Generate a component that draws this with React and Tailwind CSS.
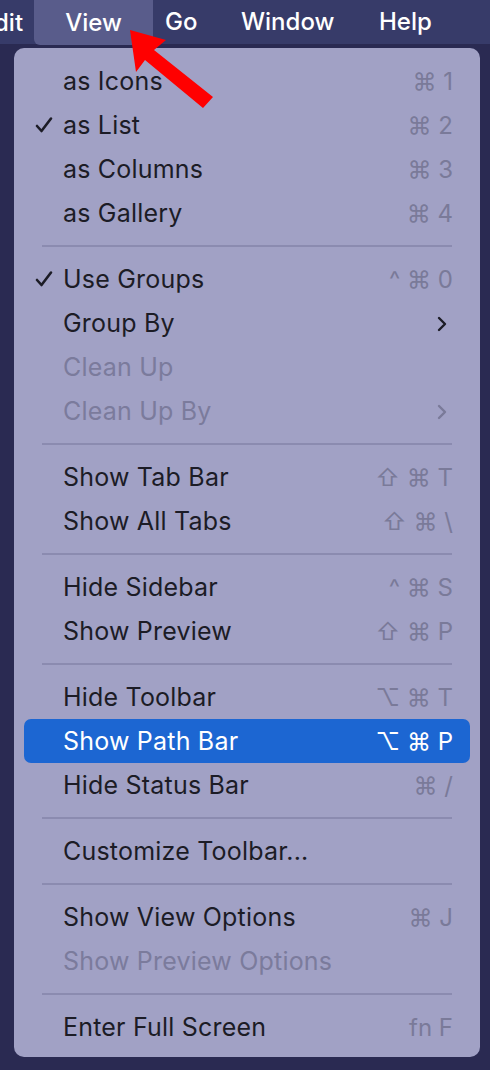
import React from "react";

const font = { fontFamily: "Inter, 'Noto Sans', 'Liberation Sans', sans-serif" };

const sections = [
  [
    { label: "as Icons", sc: "⌘ 1" },
    { label: "as List", sc: "⌘ 2", check: true },
    { label: "as Columns", sc: "⌘ 3" },
    { label: "as Gallery", sc: "⌘ 4" },
  ],
  [
    { label: "Use Groups", sc: "^ ⌘ 0", check: true },
    { label: "Group By", chevron: true },
    { label: "Clean Up", disabled: true },
    { label: "Clean Up By", chevron: true, disabled: true },
  ],
  [
    { label: "Show Tab Bar", sc: "⇧ ⌘ T" },
    { label: "Show All Tabs", sc: "⇧ ⌘ \\" },
  ],
  [
    { label: "Hide Sidebar", sc: "^ ⌘ S" },
    { label: "Show Preview", sc: "⇧ ⌘ P" },
  ],
  [
    { label: "Hide Toolbar", sc: "⌥ ⌘ T" },
    { label: "Show Path Bar", sc: "⌥ ⌘ P", active: true },
    { label: "Hide Status Bar", sc: "⌘ /" },
  ],
  [{ label: "Customize Toolbar..." }],
  [
    { label: "Show View Options", sc: "⌘ J" },
    { label: "Show Preview Options", disabled: true },
  ],
  [{ label: "Enter Full Screen", sc: "fn F" }],
];

function Check({ color }) {
  return (
    <svg width="18" height="18" viewBox="0 0 18 18" fill="none">
      <path d="M2 10 L6.5 15 L16 2.5" stroke={color} strokeWidth="2.6" strokeLinecap="round" strokeLinejoin="round" />
    </svg>
  );
}

function Chevron({ color }) {
  return (
    <svg width="10" height="16" viewBox="0 0 10 16" fill="none">
      <path d="M2 2 L8 8 L2 14" stroke={color} strokeWidth="2.4" strokeLinecap="round" strokeLinejoin="round" />
    </svg>
  );
}

function Row({ item }) {
  const textColor = item.active ? "text-white" : item.disabled ? "text-[#7b7b9c]" : "text-[#1c1c26]";
  const scColor = item.active ? "text-white" : "text-[#7a7a99]";
  return (
    <div className={`h-[44px] mx-[10px] rounded-[7px] flex items-center ${item.active ? "bg-[#1c66d2]" : ""}`}>
      <div className="w-[39px] flex justify-end pr-[10px]">
        {item.check && <Check color="#1c1c26" />}
      </div>
      <div className={`flex-1 pt-[2px] text-[25px] tracking-[0.2px] ${textColor}`}>{item.label}</div>
      <div className={`pt-[2px] pr-[17px] text-[24px] ${scColor} flex items-center`}>
        {item.sc}
        {item.chevron && (
          <div className="pr-[6px]">
            <Chevron color={item.disabled ? "#7a7a99" : "#1c1c26"} />
          </div>
        )}
      </div>
    </div>
  );
}

export default function App() {
  return (
    <div className="w-[490px] h-[1070px] bg-[#2a2a52] relative overflow-hidden" style={font}>
      <div className="h-[44px] bg-[#373b69] flex items-center text-white text-[24px] font-medium relative">
        <div className="absolute left-0 top-0 h-[45px] flex items-center">
          <span className="ml-[-6px]">dit</span>
        </div>
        <div className="absolute left-[34px] top-0 w-[119px] h-[45px] rounded-b-[6px] bg-[#595c8b] flex items-center justify-center">
          View
        </div>
        <span className="absolute left-[165px]">Go</span>
        <span className="absolute left-[241px]">Window</span>
        <span className="absolute left-[379px]">Help</span>
      </div>
      <div className="mt-[4px] ml-[14px] w-[466px] rounded-[10px] bg-[#a1a1c5] pt-[11px] pb-[8px]">
        {sections.map((sec, i) => (
          <div key={i}>
            {i > 0 && (
              <div className="h-[22px] flex items-center">
                <div className="ml-[28px] w-[410px] h-[2px] bg-[#8b8bb0]" />
              </div>
            )}
            {sec.map((it, j) => (
              <Row key={j} item={it} />
            ))}
          </div>
        ))}
      </div>
      <svg className="absolute left-0 top-0" width="490" height="140" viewBox="0 0 490 140">
        <polygon points="130,30 166,40 154,50 213,97 203,108 145,60 136,72" fill="#ff0000" />
      </svg>
    </div>
  );
}
